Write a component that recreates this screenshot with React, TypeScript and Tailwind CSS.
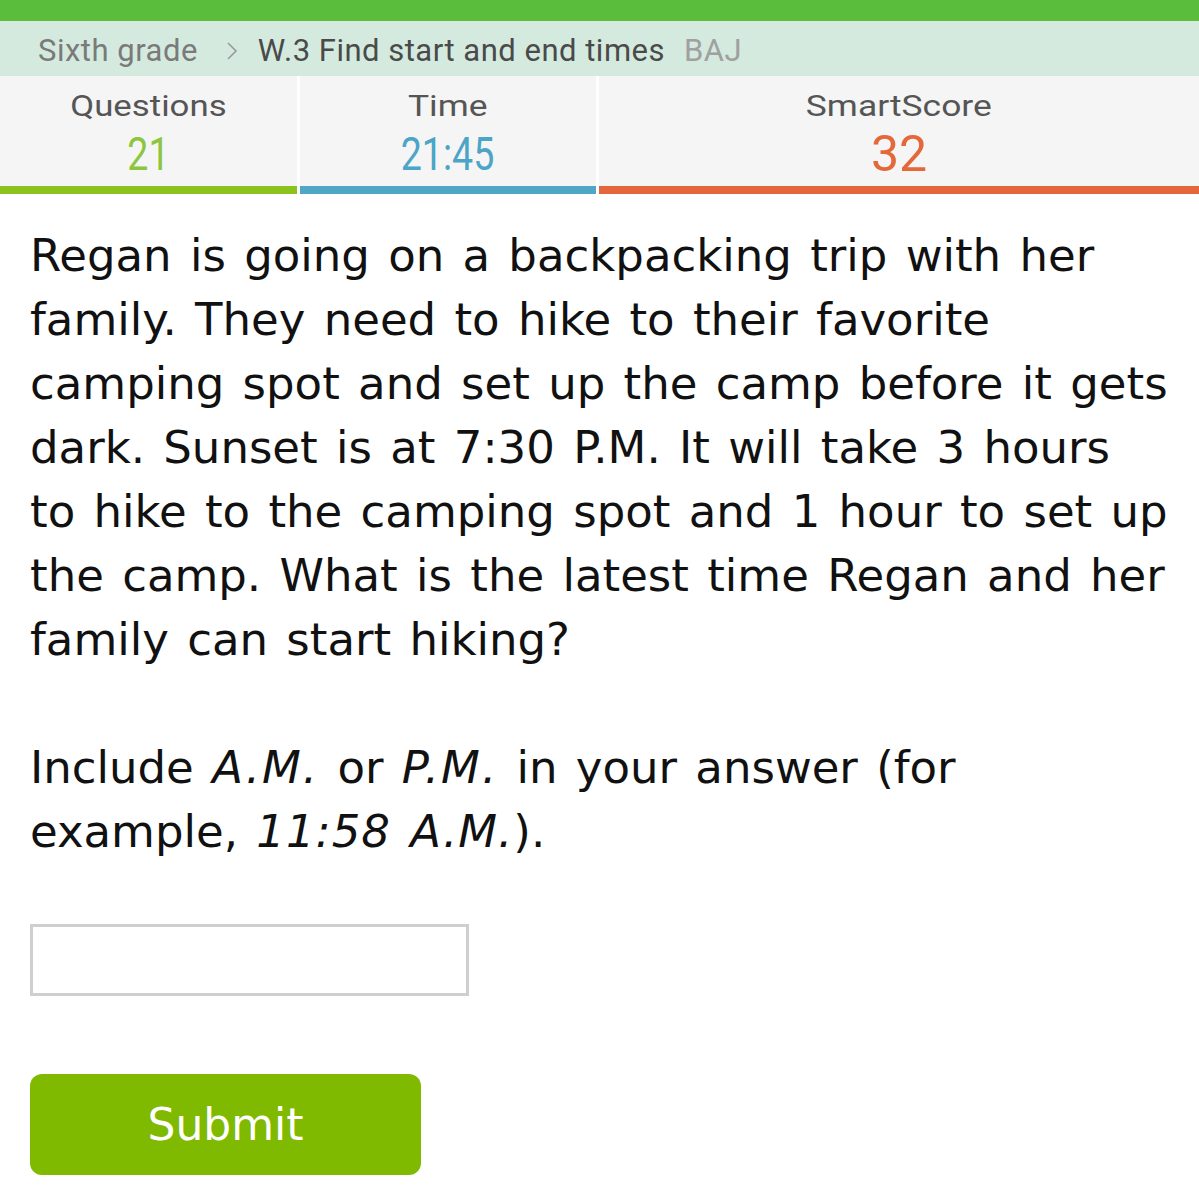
const App = () => {
  return (
    <div className="w-[1199px] min-h-[1200px] bg-white" style={{ fontFamily: '"DejaVu Sans", Verdana, sans-serif' }}>
      <div className="h-[21px] bg-[#5abd3b]" />

      <div className="h-[55px] bg-[#d4eadf] flex items-center pl-[38px] pt-[5px] text-[31px] font-['Roboto',sans-serif] tracking-[0.5px]">
        <span className="text-[#7a7a7a]">Sixth grade</span>
        <svg className="ml-[28px] mr-[20px] w-[12px] h-[20px]" viewBox="0 0 12 20" fill="none" stroke="#9a9a9a" strokeWidth={1.6}>
          <path d="M2 2l8 8-8 8" />
        </svg>
        <span className="text-[#4a4a4a]">W.3 Find start and end times</span>
        <span className="text-[#a0a0a0] ml-[19px]">BAJ</span>
      </div>

      <div className="flex gap-[3px] bg-white font-['Roboto',sans-serif]">
        <div className="w-[297px] bg-[#f5f5f5] flex flex-col">
          <div className="h-[110px] flex flex-col items-center pt-[11px]">
            <span className="inline-block scale-x-[1.16] text-[30px] text-[#555] leading-[38px]">Questions</span>
            <span className="inline-block scale-x-[0.8] text-[47px] text-[#8cc63f] leading-[58px]">21</span>
          </div>
          <div className="h-[8px] bg-[#8cc21e]" />
        </div>
        <div className="w-[296px] bg-[#f5f5f5] flex flex-col">
          <div className="h-[110px] flex flex-col items-center pt-[11px]">
            <span className="inline-block scale-x-[1.18] text-[30px] text-[#555] leading-[38px]">Time</span>
            <span className="inline-block scale-x-[0.8] text-[47px] text-[#4ca5c6] leading-[58px]">21:45</span>
          </div>
          <div className="h-[8px] bg-[#4fa6c5]" />
        </div>
        <div className="flex-1 bg-[#f5f5f5] flex flex-col">
          <div className="h-[110px] flex flex-col items-center pt-[11px]">
            <span className="inline-block scale-x-[1.18] text-[30px] text-[#555] leading-[38px]">SmartScore</span>
            <span className="text-[50px] text-[#e4683a] leading-[58px]">32</span>
          </div>
          <div className="h-[8px] bg-[#e3673a]" />
        </div>
      </div>

      <div className="pl-[30px] pr-[28px] pt-[30px] text-[45px] leading-[64px] text-[#111] [word-spacing:4px]">
        <p>
          Regan is going on a backpacking trip with her family. They need to hike to their favorite camping spot and set up the camp
          before it gets dark. Sunset is at 7:30 P.M. It will take 3 hours to hike to the camping spot and 1 hour to set up the camp.
          What is the latest time Regan and her family can start hiking?
        </p>
        <p className="mt-[64px]">
          Include <i className="tracking-[2px]">A.M.</i> or <i className="tracking-[2px]">P.M.</i> in your answer (for example,{" "}
          <i className="tracking-[1px]">11:58 A.M.</i>).
        </p>

        <input
          type="text"
          className="block mt-[60px] w-[439px] h-[72px] border-[3px] border-[#cfcfcf] outline-none"
        />

        <button className="block mt-[78px] w-[391px] h-[101px] rounded-[12px] bg-[#80ba00] text-white text-[44px] [word-spacing:0px]">
          Submit
        </button>
      </div>
    </div>
  );
};

export default App;
